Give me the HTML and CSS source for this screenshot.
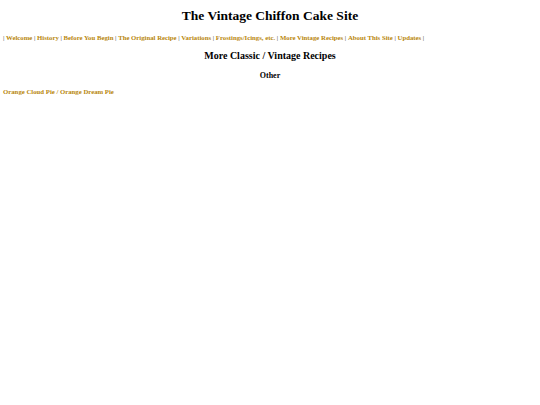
FILE: index.html
```html
<!DOCTYPE html>
<html>
<head>
<meta charset="utf-8">
<title>The Vintage Chiffon Cake Site</title>
<link rel="stylesheet" href="styles.css">
</head>
<body>
<h1 class="title">The Vintage Chiffon Cake Site</h1>
<p class="nav">| <a href="#">Welcome</a> | <a href="#">History</a> | <a href="#">Before You Begin</a> | <a href="#">The Original Recipe</a> | <a href="#">Variations</a> | <a href="#">Frostings/Icings, etc.</a> | <a href="#">More Vintage Recipes</a> | <a href="#">About This Site</a> | <a href="#">Updates</a> |</p>
<h2 class="section">More Classic / Vintage Recipes</h2>
<h3 class="sub">Other</h3>
<p class="recipe"><a href="#">Orange Cloud Pie / Orange Dream Pie</a></p>
</body>
</html>
```
FILE: styles.css
```css
body {
  margin: 0;
  padding: 0 3px;
  font-family: "Liberation Serif", "Times New Roman", serif;
  color: #000;
  background: #fff;
}
a {
  color: #b8860b;
  text-decoration: none;
  font-weight: bold;
}
.title {
  font-size: 13.5px;
  text-align: center;
  margin: 8px 0 0;
  line-height: 16px;
}
.nav {
  font-size: 6.75px;
  margin: 9px 0 0;
  line-height: 9px;
  color: #333;
}
.section {
  font-size: 10px;
  text-align: center;
  margin: 8px 0 0;
  line-height: 12px;
}
.sub {
  font-size: 8px;
  text-align: center;
  margin: 9px 0 0;
  line-height: 10px;
}
.recipe {
  font-size: 6.75px;
  margin: 7px 0 0;
  line-height: 8px;
}
```
